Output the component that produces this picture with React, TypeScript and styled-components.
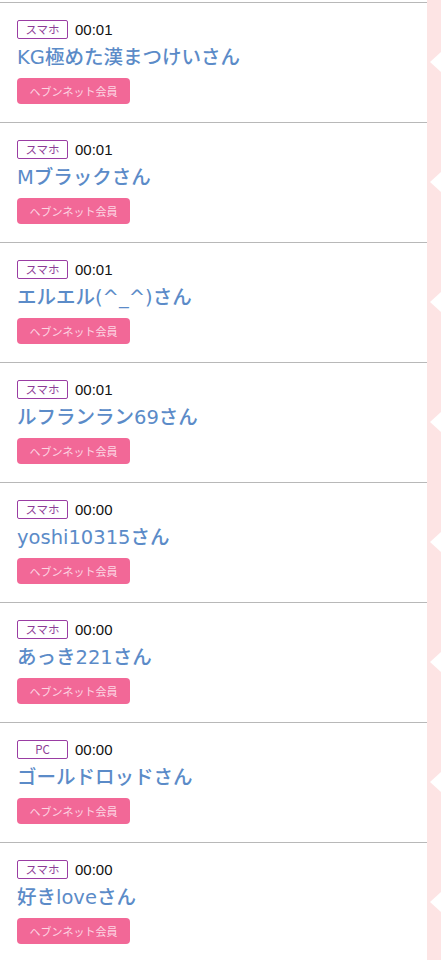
import React from "react";
import styled, { createGlobalStyle } from "styled-components";

const Global = createGlobalStyle`
  html, body { margin: 0; padding: 0; background: #fff; }
  body { font-family: "Noto Sans CJK JP", "Noto Sans", sans-serif; }
`;

const Page = styled.div`
  display: flex;
  width: 441px;
  min-height: 960px;
  overflow: hidden;
`;

const List = styled.div`
  flex: 1;
  padding-top: 2px;
`;

const Row = styled.div`
  box-sizing: border-box;
  height: 120px;
  border-top: 1px solid #b8b8b8;
  padding: 16px 17px 0;
  display: flex;
  flex-direction: column;
  align-items: flex-start;
`;

const Meta = styled.div`
  display: flex;
  align-items: center;
  gap: 7px;
  height: 20px;
`;

const Device = styled.span`
  box-sizing: border-box;
  height: 19px;
  min-width: 51px;
  padding: 0 6px;
  border: 1px solid #9a3ca3;
  border-radius: 2px;
  color: #8d3c96;
  font-size: 11.5px;
  line-height: 17px;
  text-align: center;
`;

const Time = styled.span`
  font-family: "Liberation Sans", Arial, sans-serif;
  font-size: 15px;
  color: #111;
`;

const Name = styled.div`
  margin-top: 6px;
  font-family: "DejaVu Sans", "Noto Sans CJK JP", sans-serif;
  font-size: 19.5px;
  font-weight: 500;
  line-height: 26px;
  color: #5b8bc8;
  white-space: nowrap;
`;

const Member = styled.span`
  box-sizing: border-box;
  margin-top: 7px;
  width: 113px;
  height: 26px;
  border-radius: 4px;
  background: #f26897;
  color: #fcd6e3;
  font-size: 11px;
  line-height: 26px;
  text-align: center;
`;

const Strip = styled.div`
  width: 14px;
  background: #fde4e4;
  padding-top: 2px;
`;

const Notch = styled.div`
  height: 120px;
  display: flex;
  align-items: center;
  justify-content: flex-end;
`;

const Arrow = styled.span`
  width: 0;
  height: 0;
  border-top: 10px solid transparent;
  border-bottom: 10px solid transparent;
  border-right: 11px solid #fff;
`;

const items = [
  { device: "スマホ", time: "00:01", name: "KG極めた漢まつけいさん" },
  { device: "スマホ", time: "00:01", name: "Mブラックさん" },
  { device: "スマホ", time: "00:01", name: "エルエル(^_^)さん" },
  { device: "スマホ", time: "00:01", name: "ルフランラン69さん" },
  { device: "スマホ", time: "00:00", name: "yoshi10315さん" },
  { device: "スマホ", time: "00:00", name: "あっき221さん" },
  { device: "PC", time: "00:00", name: "ゴールドロッドさん" },
  { device: "スマホ", time: "00:00", name: "好きloveさん" },
];

export default function App() {
  return (
    <>
      <Global />
      <Page>
        <List>
          {items.map((it, i) => (
            <Row key={i}>
              <Meta>
                <Device>{it.device}</Device>
                <Time>{it.time}</Time>
              </Meta>
              <Name>{it.name}</Name>
              <Member>ヘブンネット会員</Member>
            </Row>
          ))}
        </List>
        <Strip>
          {items.map((_, i) => (
            <Notch key={i}>
              <Arrow />
            </Notch>
          ))}
        </Strip>
      </Page>
    </>
  );
}
